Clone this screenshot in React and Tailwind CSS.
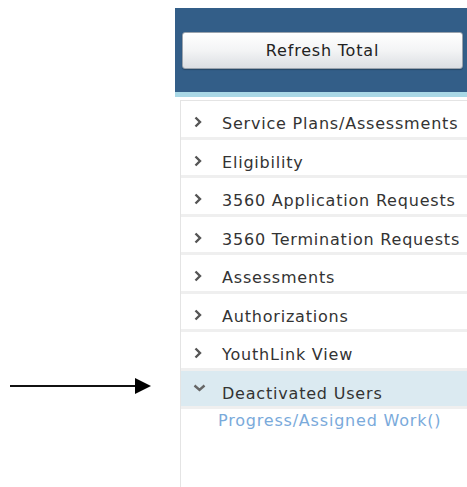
import React from "react";

const items = [
  "Service Plans/Assessments",
  "Eligibility",
  "3560 Application Requests",
  "3560 Termination Requests",
  "Assessments",
  "Authorizations",
  "YouthLink View",
];

function ChevronRight() {
  return (
    <svg width="10" height="12" viewBox="0 0 10 12" className="shrink-0">
      <path d="M2.5 1.5 L7 6 L2.5 10.5" fill="none" stroke="#555" strokeWidth="2.4" />
    </svg>
  );
}

function ChevronDown() {
  return (
    <svg width="13" height="10" viewBox="0 0 13 10" className="shrink-0">
      <path d="M1.5 2.5 L6.5 7 L11.5 2.5" fill="none" stroke="#666" strokeWidth="2.4" />
    </svg>
  );
}

function Row({ label, open }) {
  return (
    <div
      className={`flex h-[38.5px] items-start border-b-[3px] border-[#efefef] pl-[12px] pt-[11px] ${
        open ? "bg-[#dbeaf1]" : "bg-white"
      }`}
    >
      <div className={`flex w-[29px] items-center ${open ? "h-[12px]" : "h-[20px]"}`}>
        {open ? <ChevronDown /> : <ChevronRight />}
      </div>
      <span className="whitespace-nowrap text-[16px] leading-[24px] tracking-[0.8px] text-[#333]">
        {label}
      </span>
    </div>
  );
}

export default function App() {
  return (
    <div
      className="relative h-[487px] w-[467px] overflow-hidden bg-white"
      style={{ fontFamily: '"DejaVu Sans", Verdana, sans-serif' }}
    >
      {/* annotation arrow */}
      <svg className="absolute left-0 top-[370px]" width="160" height="32" viewBox="0 0 160 32">
        <line x1="10" y1="16" x2="138" y2="16" stroke="#111" strokeWidth="2" />
        <polygon points="135,8 151,16 135,24" fill="#000" />
      </svg>

      <div className="ml-[175px] mt-[8px] flex h-[479px] w-[320px] flex-col">
        <div className="h-[84px] bg-[#335e88] pl-[7px] pt-[24px]">
          <button className="flex h-[37px] w-[281px] items-center justify-center rounded-[3px] border border-[#9aa3ad] bg-gradient-to-b from-white via-[#f3f4f5] to-[#dcdfe3] text-[16px] tracking-[0.8px] text-[#222] shadow-[0_1px_1px_rgba(0,0,0,0.25)]">
            Refresh Total
          </button>
        </div>
        <div className="h-[5px] bg-[#a9d8e6]" />
        <div className="ml-[5px] mt-[3px] flex flex-1 flex-col border-l border-t border-[#e4e4e4]">
          {items.map((t) => (
            <Row key={t} label={t} />
          ))}
          <Row label="Deactivated Users" open />
          <div className="whitespace-nowrap pl-[37px] text-[16px] leading-[24px] tracking-[0.8px] text-[#7aaadb]">
            Progress/Assigned Work()
          </div>
        </div>
      </div>
    </div>
  );
}
